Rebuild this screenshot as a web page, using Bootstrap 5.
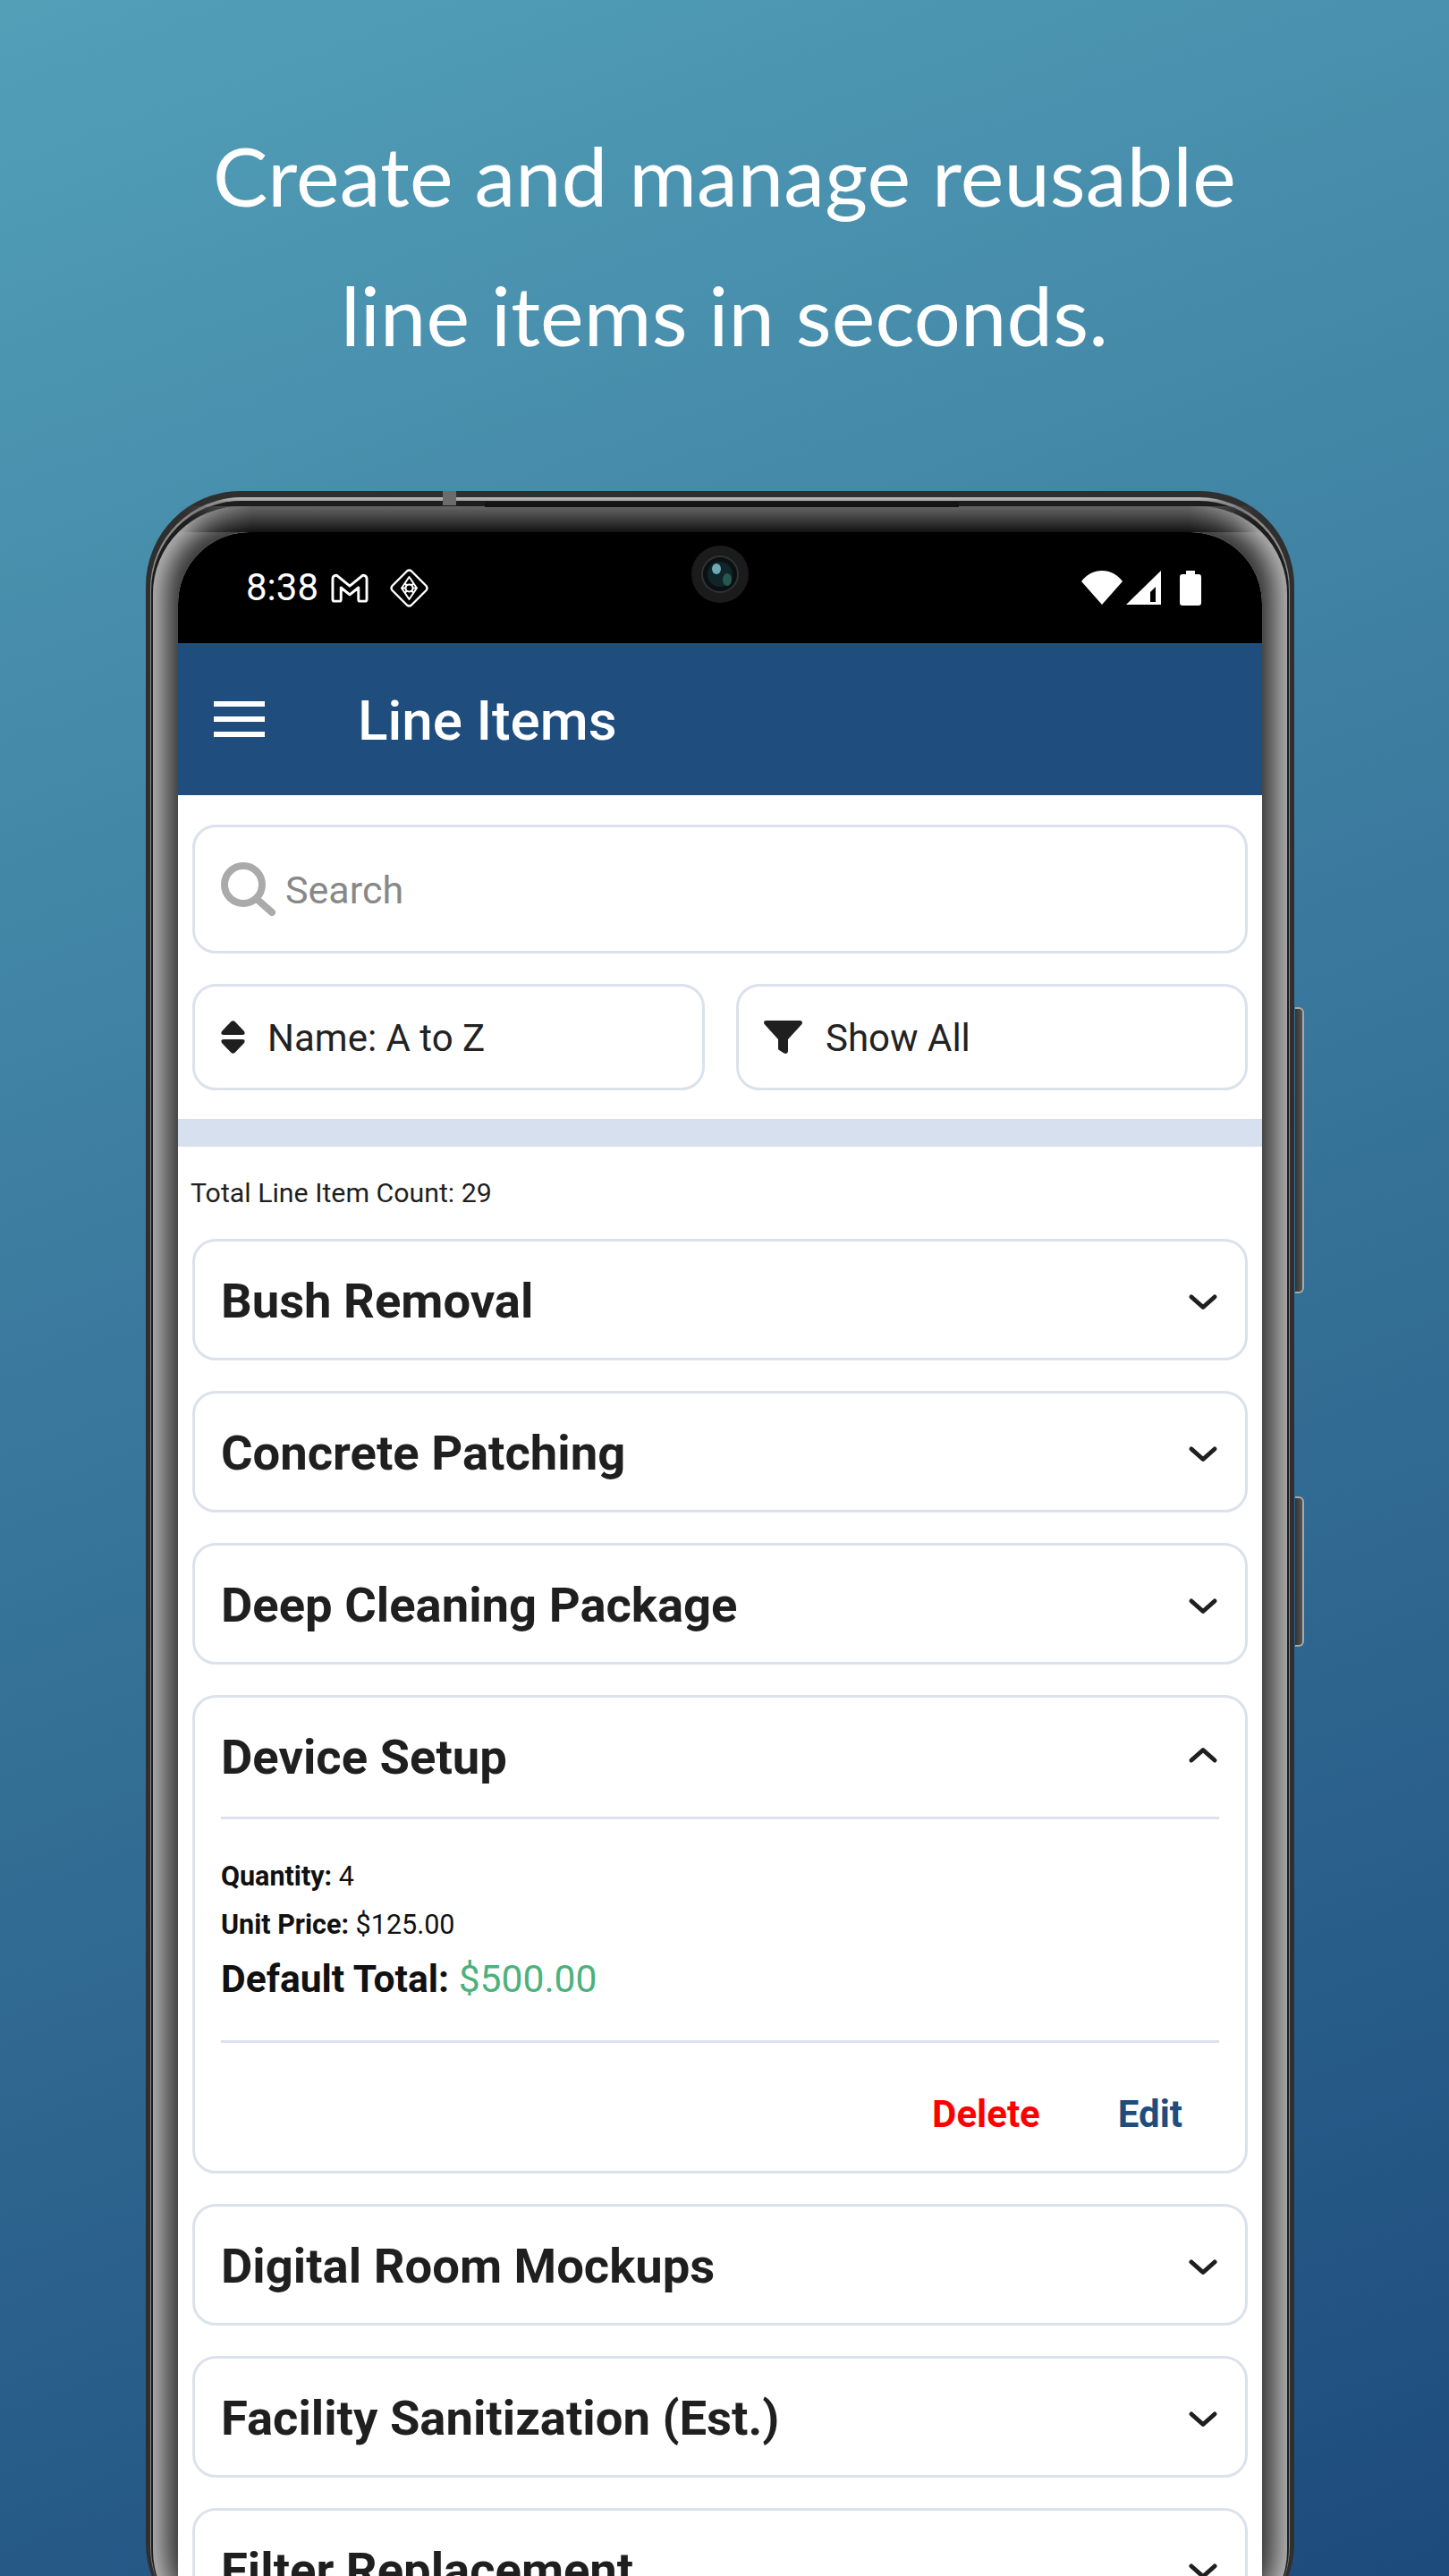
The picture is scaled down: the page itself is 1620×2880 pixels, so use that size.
<!DOCTYPE html>
<html lang="en">
<head>
<meta charset="utf-8">
<title>Line Items</title>
<link href="https://cdn.jsdelivr.net/npm/bootstrap@5.3.0/dist/css/bootstrap.min.css" rel="stylesheet">
<script src="https://cdn.jsdelivr.net/npm/bootstrap@5.3.0/dist/js/bootstrap.bundle.min.js"></script>
<style>
html,body{margin:0;padding:0;background:#1e4d7e}
body{font-family:Roboto,"Liberation Sans",sans-serif;color:#1f1f1f}
.shot{width:1620px;height:2880px;overflow:hidden;background:linear-gradient(160deg,#529fb8 0%,#1d4b7c 100%)}
.headline{margin:0;padding-top:118px;text-align:center;color:#fff;font-family:Lato,"Liberation Sans",sans-serif;font-weight:400;font-size:92px;line-height:156px;letter-spacing:.15px}
.phone{position:relative;margin:119px 0 0 163px;width:1284px;height:2400px}
.rim-a{height:100%;background:#2f2f2f;padding:7px 5px 0;border-radius:106px}
.rim-b{height:100%;background:linear-gradient(180deg,#c4c4c4,#8a8a8a 5px);padding:4px 1px 0;border-radius:102px}
.rim-c{height:100%;background:#1d1d1d;padding:6px 2px 0;border-radius:100px}
.bevel{position:relative;height:100%;padding:29px 28px 0;border-radius:98px;background:#333;box-shadow:inset 0 0 28px 14px #bababa}
.bevel::before{content:"";position:absolute;left:0;right:0;top:0;height:29px;background:linear-gradient(180deg,#666,#131313);-webkit-mask-image:linear-gradient(90deg,transparent 30px,#000 110px,#000 calc(100% - 110px),transparent calc(100% - 30px));mask-image:linear-gradient(90deg,transparent 30px,#000 110px,#000 calc(100% - 110px),transparent calc(100% - 30px))}
.screen{position:relative;height:100%;background:#fff;border-radius:80px 80px 0 0;overflow:hidden}
.statusbar{height:124px;background:#000;color:#fff;padding:0 68px 0 76px;font-size:42px}
.statusbar svg{display:block}
.time{line-height:1}
.cam{position:absolute;left:574px;top:15px}
.ph-side{position:absolute;left:1285px;width:10px;background:linear-gradient(90deg,#333,#555);border:2px solid #a9a9a9;border-left:0;border-radius:0 6px 6px 0}
.ph-side.one{top:577px;height:320px}
.ph-side.two{top:1124px;height:168px}
.ph-dot{position:absolute;left:332px;top:0;width:15px;height:16px;background:#6b6b6b}
.ph-speak{position:absolute;left:379px;top:12px;width:530px;height:6px;background:#141414}
.appbar{height:170px;background:#1e4d7e;color:#fff;padding:0 0 0 40px;border-radius:0;justify-content:flex-start}
.burger{width:57px}
.burger i{display:block;height:6px;background:#fff;margin-bottom:11px}
.burger i:last-child{margin-bottom:0}
.apptitle{margin-left:104px;padding-top:3px;font-size:62px;font-weight:500;line-height:1}
.tools{padding:33px 16px 32px}
.boxed{border:3px solid #dbe2ec;border-radius:26px;background:#fff}
.searchbox{height:144px;padding-left:29px;margin-bottom:34px;font-size:43px;color:#888}
.searchbox span{margin-left:10px;padding-top:2px}
.pick{flex:1 1 0;height:119px;padding-left:29px;font-size:42px;color:#222}
.pick span{padding-top:2px}
.pick-row{gap:35px}
.pick.sort span{margin-left:25px}
.pick.filt{padding-left:28px}
.pick.filt span{margin-left:26px}
.band{height:31px;background:#d7e0ee}
.count{margin:32px 0 31px 14px;font-size:30.3px;line-height:40px;color:#1f1f1f}
.items{padding:0 16px;gap:34px}
.entry{border:3px solid #dbe2ec;border-radius:26px;background:#fff;color:#1f1f1f}
.entry-head{height:130px;padding:5px 30px 0 29px}
.entry-head h2{margin:0;font-size:54.4px;font-weight:700;line-height:1;color:#1f1f1f}
.entry.open .entry-head svg{margin-top:-7px}
.rule{height:3px;background:#dbe2ec;margin:0 29px}
.rule.top{margin-top:3px}
.detail{padding:37px 29px 36px}
.detail div{font-size:30.5px;line-height:54px;color:#111}
.detail b{font-weight:700}
.detail .grand{font-size:42.6px;line-height:66px}
.money{color:#4bb27c}
.acts{padding:50px 70px 33px 0;gap:87px;font-size:42px;font-weight:700;line-height:60px}
.acts a{text-decoration:none;padding:0;border:0;font-size:inherit;font-weight:inherit;line-height:inherit}
.acts .del{color:#f00}
.acts .edt{color:#1e4d7e}
</style>
</head>
<body>
<div class="shot">
  <h1 class="headline">Create and manage reusable<br>line items in seconds.</h1>
  <div class="phone">
    <div class="ph-side one"></div>
    <div class="ph-side two"></div>
    <div class="rim-a"><div class="rim-b"><div class="rim-c"><div class="bevel">
      <div class="screen">
        <div class="statusbar d-flex align-items-center justify-content-between">
          <div class="d-flex align-items-center">
            <span class="time">8:38</span>
            <svg style="margin-left:14px" width="42" height="33" viewBox="0 0 43 33" fill="none" stroke="#fff" stroke-width="3" stroke-linejoin="round"><path d="M2 6C2 2 6 1 8 3L21.500 14 35 3C37 1 41 2 41 6V29C41 31 40 31.500 39 31.500H33C32 31.500 31.500 31 31.500 29V16L21.500 24 11.500 16V29C11.500 31 11 31.500 10 31.500H4C3 31.500 2 31 2 29Z"/></svg>
            <svg class="ms-4" width="43" height="43" viewBox="0 0 43 43" fill="none" stroke="#fff" stroke-width="2.400" stroke-linejoin="round"><path d="M19 2.500Q21.500 .5 24 2.500L40.500 19Q42.500 21.500 40.500 24L24 40.500Q21.500 42.500 19 40.500L2.500 24Q.5 21.500 2.500 19Z"/><path d="M21.500 9 13 21.500H30ZM13 21.500 21.500 34 30 21.500M16 15.500 27 27.500M27 15.500 16 27.500" stroke-width="2"/><circle cx="21.500" cy="21.500" r="4" fill="#000" stroke-width="2"/></svg>
          </div>
          <div class="d-flex align-items-center">
            <svg width="46" height="38" viewBox="0 0 46 38" fill="#fff"><path d="M0 12C6 4 14 0 23 0S40 4 46 12L23 38Z"/></svg>
            <svg class="ms-1" width="39" height="38" viewBox="0 0 39 38"><path fill="#fff" d="M0 38 39 0V38Z"/><path fill="#000" d="M27 24 33 18V35H27Z"/></svg>
            <svg style="margin-left:21px" width="24" height="39" viewBox="0 0 24 39" fill="#fff"><path d="M7 0H17V4H21Q24 4 24 7V36Q24 39 21 39H3Q0 39 0 36V7Q0 4 3 4H7Z"/></svg>
          </div>
        </div>
        <svg class="cam" width="64" height="64" viewBox="0 0 64 64"><circle cx="32" cy="32" r="32" fill="#1b1b1b"/><circle cx="32" cy="32" r="20" fill="#0b1113" stroke="#2c3436" stroke-width="2"/><circle cx="32" cy="32" r="14" fill="#10252a"/><ellipse cx="28" cy="26" rx="5" ry="6" fill="#6fa9b6"/><ellipse cx="40" cy="38" rx="5" ry="7" fill="#27584f"/></svg>

        <nav class="navbar appbar d-flex align-items-center">
          <div class="burger"><i></i><i></i><i></i></div>
          <div class="apptitle">Line Items</div>
        </nav>

        <div class="tools">
          <div class="boxed searchbox d-flex align-items-center">
            <svg width="62" height="60" viewBox="0 0 62 60" fill="none" stroke="#aaa" stroke-width="8" stroke-linecap="round"><circle cx="25" cy="25" r="21"/><path d="M41 42 57 56"/></svg>
            <span>Search</span>
          </div>
          <div class="d-flex pick-row">
            <div class="boxed pick sort d-flex align-items-center">
              <svg width="27" height="37" viewBox="0 0 27 37" fill="#1f1f1f"><path d="M11.500 1Q13.500-.5 15.500 1L26 12Q28 16 24 16H3Q-1 16 1 12ZM3 21H24Q28 21 26 25L15.500 36Q13.500 37.500 11.500 36L1 25Q-1 21 3 21Z"/></svg>
              <span>Name: A to Z</span>
            </div>
            <div class="boxed pick filt d-flex align-items-center">
              <svg width="43" height="37" viewBox="0 0 43 37" fill="#1f1f1f"><path d="M3 0H40C43 0 43.500 2 42.500 4L27 21V34C27 37 24 37.500 22.500 36.500L17 33C16 32.500 16 31.500 16 30.500V21L.6 4C-.5 2 0 0 3 0Z"/></svg>
              <span>Show All</span>
            </div>
          </div>
        </div>
        <div class="band"></div>
        <div class="count">Total Line Item Count: 29</div>

        <div class="items d-flex flex-column">
          <div class="entry"><div class="entry-head d-flex align-items-center justify-content-between"><h2>Bush Removal</h2><svg width="34" height="20" viewBox="0 0 34 20" fill="none" stroke="#1f1f1f" stroke-width="5" stroke-linecap="round" stroke-linejoin="round"><path d="M4 4 17 15.500 30 4"/></svg></div></div>
          <div class="entry"><div class="entry-head d-flex align-items-center justify-content-between"><h2>Concrete Patching</h2><svg width="34" height="20" viewBox="0 0 34 20" fill="none" stroke="#1f1f1f" stroke-width="5" stroke-linecap="round" stroke-linejoin="round"><path d="M4 4 17 15.500 30 4"/></svg></div></div>
          <div class="entry"><div class="entry-head d-flex align-items-center justify-content-between"><h2>Deep Cleaning Package</h2><svg width="34" height="20" viewBox="0 0 34 20" fill="none" stroke="#1f1f1f" stroke-width="5" stroke-linecap="round" stroke-linejoin="round"><path d="M4 4 17 15.500 30 4"/></svg></div></div>
          <div class="entry open">
            <div class="entry-head d-flex align-items-center justify-content-between"><h2>Device Setup</h2><svg width="34" height="20" viewBox="0 0 34 20" fill="none" stroke="#1f1f1f" stroke-width="5" stroke-linecap="round" stroke-linejoin="round"><path d="M4 16 17 4.500 30 16"/></svg></div>
            <div class="rule top"></div>
            <div class="detail">
              <div><b>Quantity:</b> 4</div>
              <div><b>Unit Price:</b> $125.00</div>
              <div class="grand"><b>Default Total:</b> <span class="money">$500.00</span></div>
            </div>
            <div class="rule"></div>
            <div class="acts d-flex justify-content-end">
              <a class="btn btn-link del" href="#">Delete</a>
              <a class="btn btn-link edt" href="#">Edit</a>
            </div>
          </div>
          <div class="entry"><div class="entry-head d-flex align-items-center justify-content-between"><h2>Digital Room Mockups</h2><svg width="34" height="20" viewBox="0 0 34 20" fill="none" stroke="#1f1f1f" stroke-width="5" stroke-linecap="round" stroke-linejoin="round"><path d="M4 4 17 15.500 30 4"/></svg></div></div>
          <div class="entry"><div class="entry-head d-flex align-items-center justify-content-between"><h2>Facility Sanitization (Est.)</h2><svg width="34" height="20" viewBox="0 0 34 20" fill="none" stroke="#1f1f1f" stroke-width="5" stroke-linecap="round" stroke-linejoin="round"><path d="M4 4 17 15.500 30 4"/></svg></div></div>
          <div class="entry"><div class="entry-head d-flex align-items-center justify-content-between"><h2>Filter Replacement</h2><svg width="34" height="20" viewBox="0 0 34 20" fill="none" stroke="#1f1f1f" stroke-width="5" stroke-linecap="round" stroke-linejoin="round"><path d="M4 4 17 15.500 30 4"/></svg></div></div>
        </div>
      </div>
    </div></div></div></div>
    <div class="ph-dot"></div>
    <div class="ph-speak"></div>
  </div>
</div>
</body>
</html>
